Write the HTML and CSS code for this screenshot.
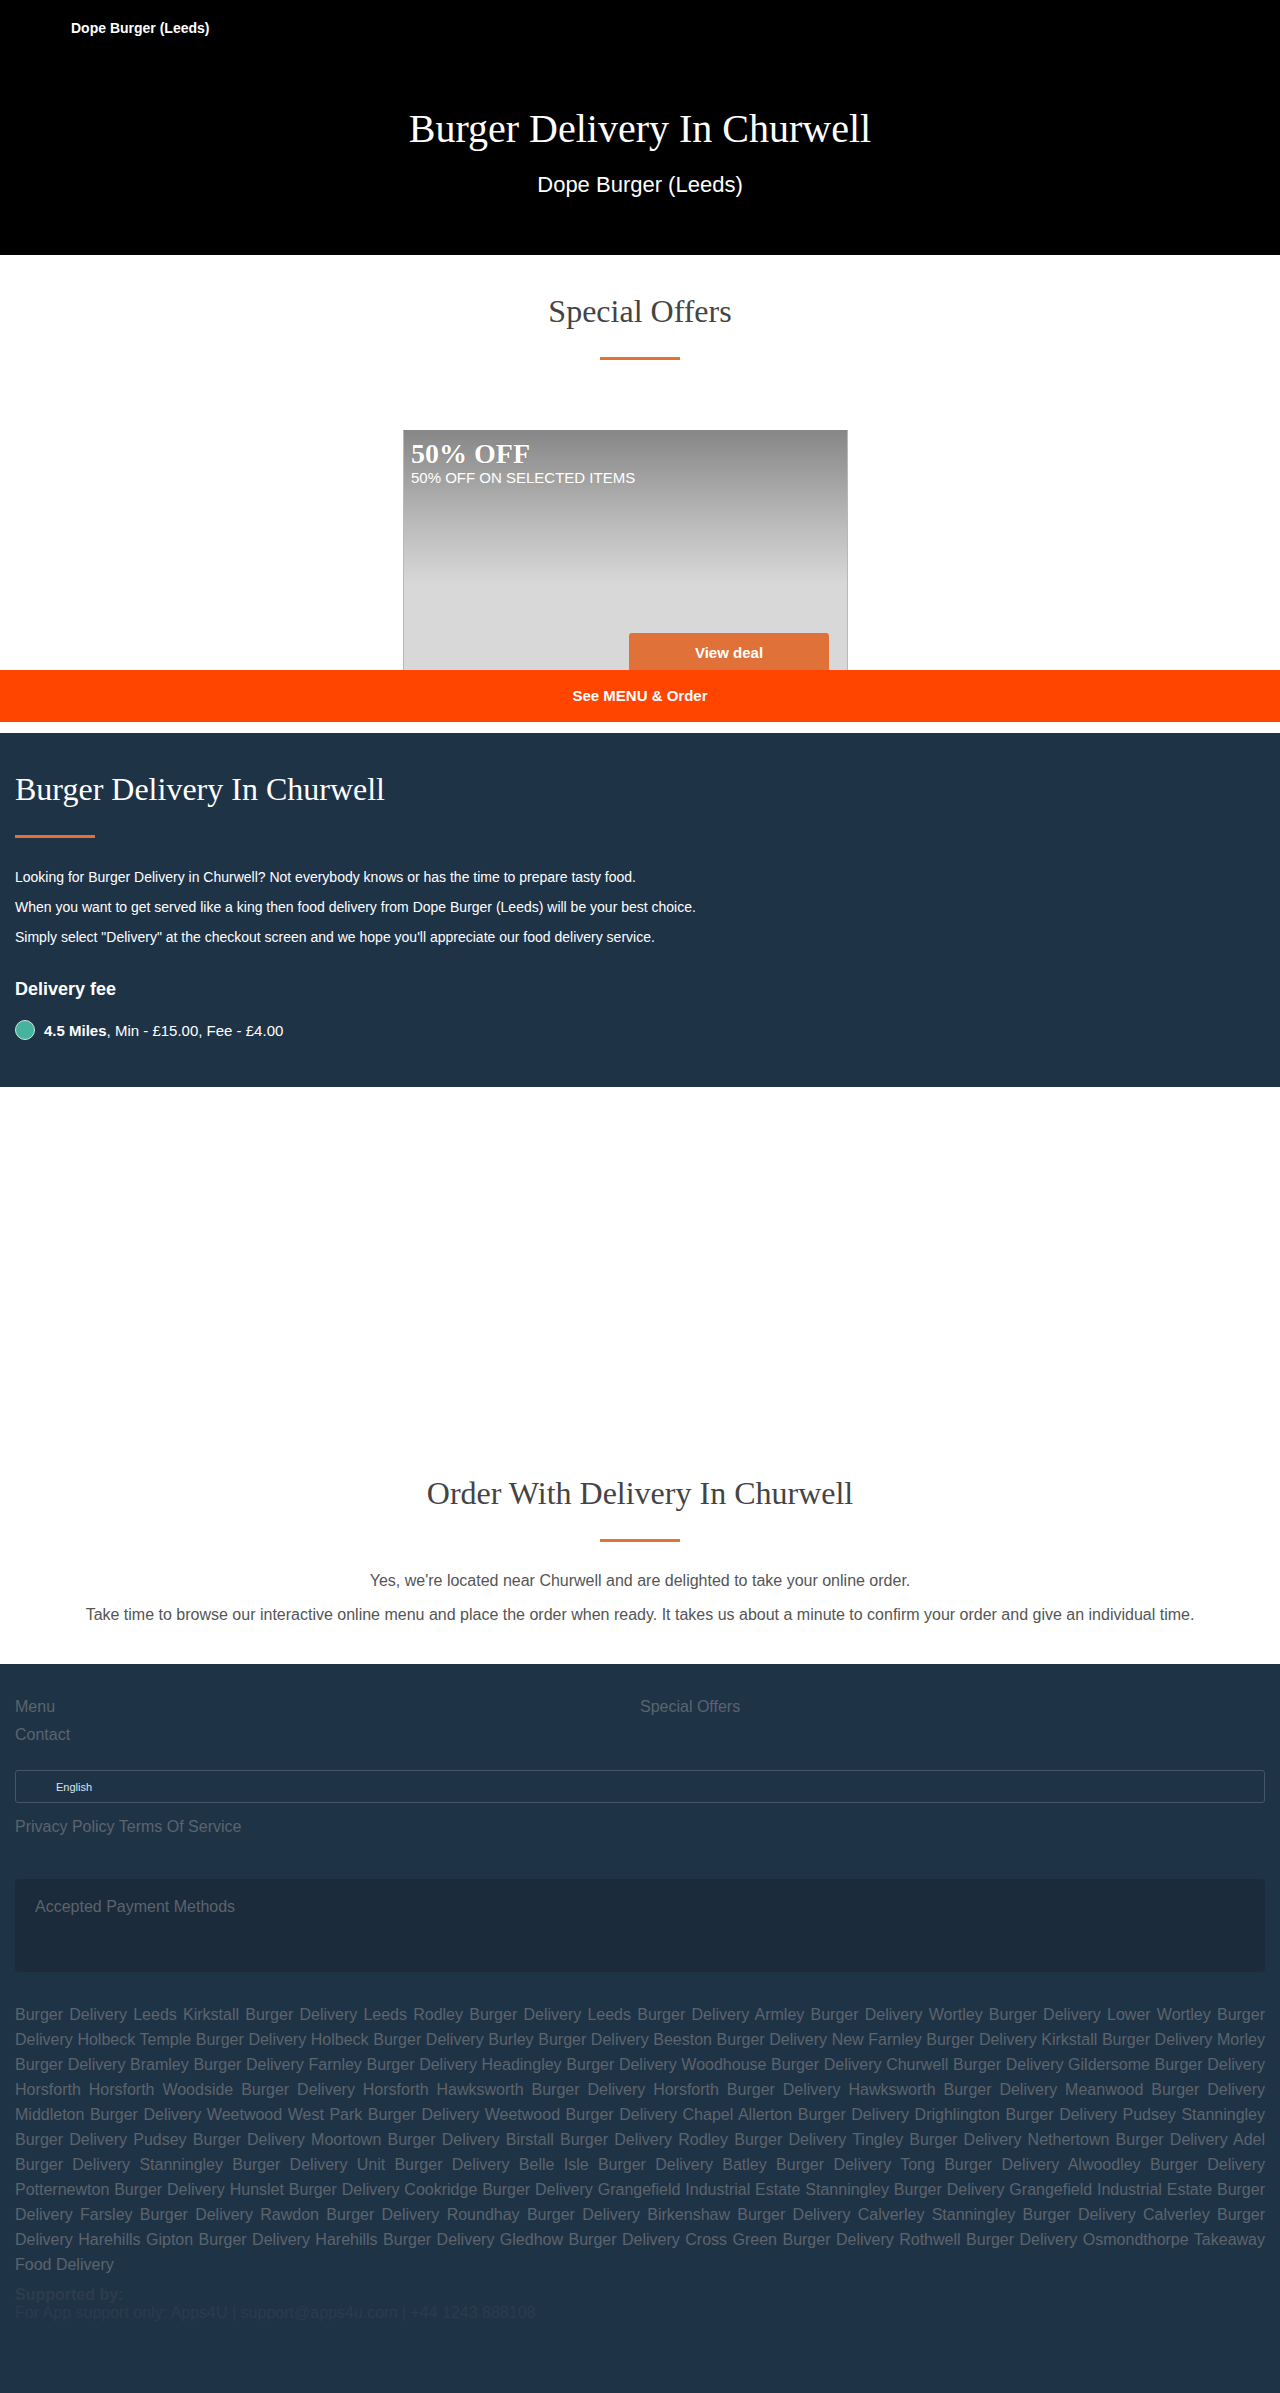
FILE: index.html
```html
<!DOCTYPE html>
<html lang="en">
<head>
<meta charset="utf-8">
<title>Burger Delivery In Churwell - Dope Burger (Leeds)</title>
<link rel="stylesheet" href="styles.css">
</head>
<body>
<header class="hero">
  <div class="brand">Dope Burger (Leeds)</div>
  <h1 class="hero-title">Burger Delivery In Churwell</h1>
  <div class="hero-sub">Dope Burger (Leeds)</div>
</header>

<section class="offers">
  <h2 class="sec-title">Special Offers</h2>
  <div class="rule rule-center"></div>
  <div class="slider">
    <div class="offer-card">
      <div class="offer-name">50% OFF</div>
      <div class="offer-desc">50% OFF ON SELECTED ITEMS</div>
      <a class="offer-btn">View deal</a>
    </div>
  </div>
</section>

<a class="order-bar">See MENU &amp; Order</a>

<section class="info">
  <h2 class="info-title">Burger Delivery In Churwell</h2>
  <div class="rule"></div>
  <p class="info-text">Looking for Burger Delivery in Churwell? Not everybody knows or has the time to prepare tasty food.</p>
  <p class="info-text">When you want to get served like a king then food delivery from Dope Burger (Leeds) will be your best choice.</p>
  <p class="info-text">Simply select "Delivery" at the checkout screen and we hope you'll appreciate our food delivery service.</p>
  <h3 class="fee-title">Delivery fee</h3>
  <div class="fee-row">
    <span class="fee-dot"></span>
    <span class="fee-text"><b>4.5 Miles</b>, Min - £15.00, Fee - £4.00</span>
  </div>
</section>

<section class="order">
  <div class="map"></div>
  <h2 class="sec-title">Order With Delivery In Churwell</h2>
  <div class="rule rule-center"></div>
  <p class="order-text">Yes, we're located near Churwell and are delighted to take your online order.</p>
  <p class="order-text">Take time to browse our interactive online menu and place the order when ready. It takes us about a minute to confirm your order and give an individual time.</p>
</section>

<footer class="footer">
  <nav class="foot-links">
    <a>Menu</a>
    <a>Special Offers</a>
    <a>Contact</a>
  </nav>
  <div class="lang">English</div>
  <div class="legal"><a>Privacy Policy</a> <a>Terms Of Service</a></div>
  <div class="payments">Accepted Payment Methods</div>
  <p class="areas">Burger Delivery Leeds Kirkstall Burger Delivery Leeds Rodley Burger Delivery Leeds Burger Delivery Armley Burger Delivery Wortley Burger Delivery Lower Wortley Burger Delivery Holbeck Temple Burger Delivery Holbeck Burger Delivery Burley Burger Delivery Beeston Burger Delivery New Farnley Burger Delivery Kirkstall Burger Delivery Morley Burger Delivery Bramley Burger Delivery Farnley Burger Delivery Headingley Burger Delivery Woodhouse Burger Delivery Churwell Burger Delivery Gildersome Burger Delivery Horsforth Horsforth Woodside Burger Delivery Horsforth Hawksworth Burger Delivery Horsforth Burger Delivery Hawksworth Burger Delivery Meanwood Burger Delivery Middleton Burger Delivery Weetwood West Park Burger Delivery Weetwood Burger Delivery Chapel Allerton Burger Delivery Drighlington Burger Delivery Pudsey Stanningley Burger Delivery Pudsey Burger Delivery Moortown Burger Delivery Birstall Burger Delivery Rodley Burger Delivery Tingley Burger Delivery Nethertown Burger Delivery Adel Burger Delivery Stanningley Burger Delivery Unit Burger Delivery Belle Isle Burger Delivery Batley Burger Delivery Tong Burger Delivery Alwoodley Burger Delivery Potternewton Burger Delivery Hunslet Burger Delivery Cookridge Burger Delivery Grangefield Industrial Estate Stanningley Burger Delivery Grangefield Industrial Estate Burger Delivery Farsley Burger Delivery Rawdon Burger Delivery Roundhay Burger Delivery Birkenshaw Burger Delivery Calverley Stanningley Burger Delivery Calverley Burger Delivery Harehills Gipton Burger Delivery Harehills Burger Delivery Gledhow Burger Delivery Cross Green Burger Delivery Rothwell Burger Delivery Osmondthorpe Takeaway Food Delivery</p>
  <div class="support">
    <div class="support-title">Supported by:</div>
    <div class="support-text">For App support only: Apps4U | support@apps4u.com | +44 1243 888108</div>
  </div>
</footer>
</body>
</html>
```
FILE: styles.css
```css
html {
  background: #1f3347;
}
body {
  margin: 0;
  background: #fff;
  font-family: "Liberation Sans", Arial, sans-serif;
  color: #555;
}
a {
  text-decoration: none;
  cursor: pointer;
}

/* hero */
.hero {
  background: #000;
  color: #fff;
  height: 255px;
  box-sizing: border-box;
  padding-top: 20px;
  text-align: center;
}
.brand {
  text-align: left;
  padding-left: 71px;
  font-size: 14px;
  line-height: 16px;
  font-weight: bold;
}
.hero-title {
  margin: 70px 0 0;
  font-family: "Liberation Serif", "Times New Roman", serif;
  font-weight: normal;
  font-size: 40px;
  line-height: 46px;
}
.hero-sub {
  margin-top: 20px;
  font-size: 22px;
  line-height: 26px;
}

/* section titles */
.sec-title {
  margin: 0;
  text-align: center;
  font-family: "Liberation Serif", "Times New Roman", serif;
  font-weight: normal;
  font-size: 32px;
  line-height: 38px;
  color: #444;
}
.rule {
  width: 80px;
  height: 3px;
  background: #e07139;
  margin-top: 27px;
}
.rule-center {
  margin-left: auto;
  margin-right: auto;
}

/* offers */
.offers {
  height: 415px;
  overflow: hidden;
  box-sizing: border-box;
  padding-top: 37px;
}
.slider {
  display: flex;
  justify-content: center;
  padding-right: 29px;
  margin-top: 70px;
}
.offer-card {
  width: 445px;
  height: 258px;
  box-sizing: border-box;
  border: 1px solid #b8b8b8;
  border-top-color: #888;
  background: linear-gradient(to bottom, #878787 0%, #bdbdbd 38%, #d8d8d8 60%, #d8d8d8 100%);
  padding: 7px 0 0 7px;
  display: flex;
  flex-direction: column;
  color: #fff;
}
.offer-name {
  font-family: "Liberation Serif", "Times New Roman", serif;
  font-weight: bold;
  font-size: 28px;
  line-height: 31px;
  text-shadow: 0 0 1px rgba(0, 0, 0, 0.25);
}
.offer-desc {
  font-size: 15px;
  line-height: 17px;
}
.offer-btn {
  margin-top: auto;
  align-self: flex-end;
  margin-right: 18px;
  margin-bottom: 14px;
  width: 200px;
  height: 40px;
  line-height: 40px;
  text-align: center;
  background: #e07139;
  border-radius: 3px;
  color: #fff;
  font-weight: bold;
  font-size: 15px;
}

/* order bar */
.order-bar {
  display: block;
  height: 52px;
  line-height: 52px;
  background: #ff4500;
  color: #fff;
  text-align: center;
  font-weight: bold;
  font-size: 15px;
}

/* info */
.info {
  margin-top: 11px;
  background: #1f3347;
  color: #fff;
  padding: 37px 15px 46px;
}
.info-title {
  margin: 0;
  font-family: "Liberation Serif", "Times New Roman", serif;
  font-weight: normal;
  font-size: 32px;
  line-height: 38px;
}
.info .rule {
  margin-bottom: 29px;
}
.info-text {
  margin: 0 0 10px;
  font-size: 14px;
  line-height: 20px;
}
.fee-title {
  margin: 31px 0 0;
  font-size: 18px;
  line-height: 22px;
  font-weight: bold;
}
.fee-row {
  margin-top: 19px;
  display: flex;
  align-items: center;
  gap: 9px;
  height: 22px;
}
.fee-dot {
  width: 20px;
  height: 20px;
  box-sizing: border-box;
  border-radius: 50%;
  background: #45b39d;
  border: 1px solid #cfe8e2;
}
.fee-text {
  font-size: 15px;
}

/* order section */
.order {
  padding: 0 15px 38px;
}
.map {
  height: 350px;
  margin-bottom: 37px;
}
.order-text {
  text-align: center;
  font-size: 16px;
  line-height: 22px;
  margin: 0 0 12px;
  color: #555;
}
.order .rule {
  margin-bottom: 28px;
}
.order-text:last-child {
  margin-bottom: 0;
}

/* footer */
.footer {
  background: #1f3347;
  color: #5c646c;
  padding: 29px 15px 71px;
  font-size: 16px;
}
.foot-links {
  display: grid;
  grid-template-columns: 1fr 1fr;
  line-height: 28px;
}
.foot-links a {
  color: #5c646c;
}
.lang {
  margin-top: 21px;
  height: 33px;
  box-sizing: border-box;
  border: 1px solid #46566a;
  border-radius: 3px;
  padding-left: 40px;
  display: flex;
  align-items: center;
  font-size: 11px;
  color: #dde3ea;
}
.legal {
  margin-top: 13px;
  line-height: 22px;
}
.legal a {
  color: #5c646c;
}
.payments {
  margin-top: 41px;
  height: 93px;
  box-sizing: border-box;
  background: #1b2b3b;
  border-radius: 4px;
  padding: 17px 20px 0;
  line-height: 22px;
}
.areas {
  margin: 30px 0 0;
  line-height: 25px;
  text-align: justify;
}
.support {
  margin-top: 9px;
}
.support-title {
  font-weight: bold;
  color: #2d3c4c;
  line-height: 18px;
}
.support-text {
  color: #2b3b4d;
  line-height: 18px;
}
```
